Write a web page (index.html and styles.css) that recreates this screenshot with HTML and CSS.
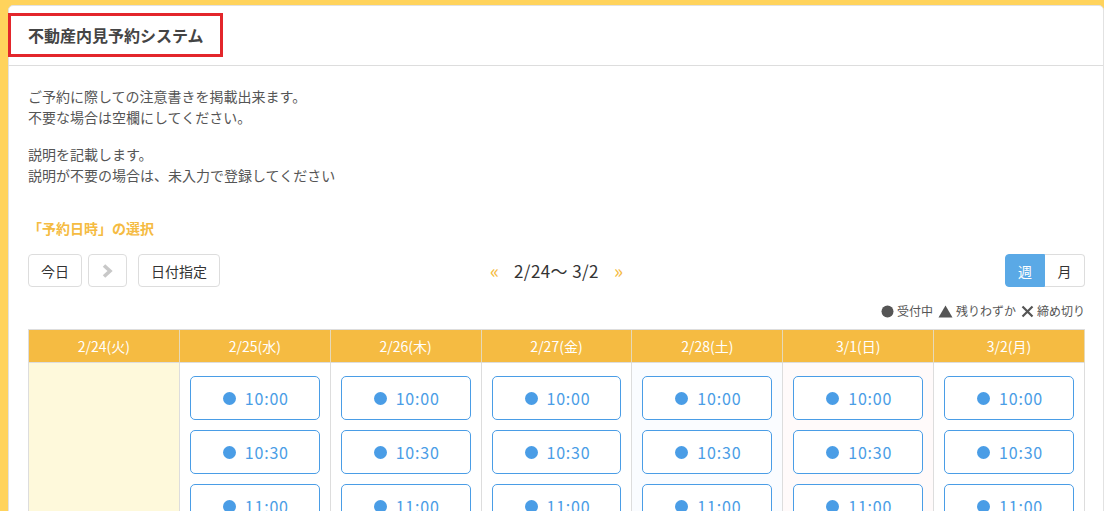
FILE: index.html
```html
<!DOCTYPE html>
<html lang="ja">
<head>
  <meta charset="UTF-8" />
  <meta name="viewport" content="width=device-width, initial-scale=1.0"/>
  <title>不動産内見予約システム</title>
  <link rel="stylesheet" href="styles.css">
</head>
<body>
  <div class="card">
    <!-- HEADER -->
    <header class="page-header">
      <h1 class="site-title">不動産内見予約システム</h1>
    </header>

    <main class="content">
      <p class="note">ご予約に際しての注意書きを掲載出来ます。<br>不要な場合は空欄にしてください。</p>
      <p class="note">説明を記載します。<br>説明が不要の場合は、未入力で登録してください</p>

      <h2 class="section-title">「予約日時」の選択</h2>

      <!-- TOOLBAR -->
      <div class="toolbar">
        <div class="tool-left">
          <button class="btn">今日</button>
          <button class="btn btn-icon" disabled>
            <svg width="11" height="14" viewBox="0 0 11 14"><path d="M2 1.5 L8 7 L2 12.5" fill="none" stroke="#c8c8c8" stroke-width="3.6"/></svg>
          </button>
          <button class="btn btn-gap">日付指定</button>
        </div>
        <div class="range">
          <span class="arrow">«</span>
          <span class="range-text">2/24～ 3/2</span>
          <span class="arrow">»</span>
        </div>
        <div class="tool-right">
          <div class="toggle">
            <button class="toggle-btn active">週</button>
            <button class="toggle-btn">月</button>
          </div>
        </div>
      </div>

      <div class="legend">
        <span class="legend-item"><svg width="13" height="13" viewBox="0 0 13 13"><circle cx="6.5" cy="6.5" r="6" fill="#555"/></svg>受付中</span>
        <span class="legend-item"><svg width="15" height="13" viewBox="0 0 15 13"><path d="M7.5 0.5 L14.5 12.5 L0.5 12.5 Z" fill="#555"/></svg>残りわずか</span>
        <span class="legend-item"><svg width="13" height="13" viewBox="0 0 13 13"><path d="M1.5 1.5 L11.5 11.5 M11.5 1.5 L1.5 11.5" stroke="#555" stroke-width="2.2"/></svg>締め切り</span>
      </div>

      <!-- CALENDAR -->
      <div class="calendar">
        <div class="cal-head">2/24(火)</div>
        <div class="cal-head">2/25(水)</div>
        <div class="cal-head">2/26(木)</div>
        <div class="cal-head">2/27(金)</div>
        <div class="cal-head">2/28(土)</div>
        <div class="cal-head">3/1(日)</div>
        <div class="cal-head">3/2(月)</div>

        <div class="cal-day past"></div>
        <div class="cal-day" data-slots></div>
        <div class="cal-day" data-slots></div>
        <div class="cal-day" data-slots></div>
        <div class="cal-day sat" data-slots></div>
        <div class="cal-day sun" data-slots></div>
        <div class="cal-day" data-slots></div>
      </div>
    </main>
  </div>

  <script>
    const times = ['10:00', '10:30', '11:00', '11:30', '12:00'];
    document.querySelectorAll('[data-slots]').forEach(day => {
      times.forEach(t => {
        const b = document.createElement('button');
        b.className = 'slot';
        b.innerHTML = '<span class="dot"></span>' + t;
        day.appendChild(b);
      });
    });
  </script>
</body>
</html>
```

FILE: styles.css
```css
:root {
  --yellow: #ffd35c;
  --orange: #f5bb42;
  --blue: #4a9de6;
  --blue-btn: #5aa9e6;
  --border: #dddddd;
  --text: #555555;
  --title: #444444;
}

* {
  box-sizing: border-box;
}

body {
  margin: 0;
  padding: 5px 0 0 8px;
  background: var(--yellow);
  font-family: "Noto Sans CJK JP", "Noto Sans", sans-serif;
  color: var(--text);
  height: 511px;
  overflow: hidden;
}

.card {
  background: #fff;
  border: 1px solid #e2e2e2;
  border-radius: 5px 5px 0 0;
  min-height: 600px;
}

.page-header {
  padding-top: 7px;
  padding-bottom: 8px;
  border-bottom: 1px solid var(--border);
  margin-left: -1px;
}

.site-title {
  display: inline-block;
  margin: 0;
  padding: 0 16px 0 17px;
  height: 44px;
  line-height: 38px;
  border: 3px solid #e3262b;
  font-size: 16px;
  font-weight: bold;
  color: var(--title);
}

.content {
  padding: 20px 18px 0 19px;
}

.note {
  margin: 0 0 16px;
  font-size: 14px;
  line-height: 21px;
}

.section-title {
  margin: 32px 0 15px;
  font-size: 14px;
  line-height: 21px;
  font-weight: bold;
  color: var(--orange);
}

.toolbar {
  display: grid;
  grid-template-columns: 1fr auto 1fr;
  align-items: center;
}

.tool-left {
  display: flex;
  gap: 6px;
}

.btn {
  height: 33px;
  padding: 0 12px;
  background: #fff;
  border: 1px solid var(--border);
  border-radius: 4px;
  font-family: inherit;
  font-size: 14px;
  color: #333;
}

.btn-icon {
  width: 39px;
  padding: 0;
  display: flex;
  align-items: center;
  justify-content: center;
}

.btn-gap {
  margin-left: 5px;
}

.range {
  display: flex;
  align-items: center;
  gap: 15px;
  font-size: 17px;
  color: #333;
}

.range-text {
  letter-spacing: 0.4px;
}

.arrow {
  color: var(--orange);
  font-size: 19px;
  line-height: 1;
  padding-bottom: 2px;
}

.tool-right {
  display: flex;
  justify-content: flex-end;
}

.toggle {
  display: flex;
}

.toggle-btn {
  width: 40px;
  height: 33px;
  border: 1px solid var(--border);
  background: #fff;
  font-family: inherit;
  font-size: 14px;
  color: #333;
}

.toggle-btn:first-child {
  border-radius: 4px 0 0 4px;
}

.toggle-btn:last-child {
  border-radius: 0 4px 4px 0;
  border-left: none;
}

.toggle-btn.active {
  background: var(--blue-btn);
  border-color: var(--blue-btn);
  color: #fff;
}

.legend {
  display: flex;
  justify-content: flex-end;
  gap: 5px;
  margin: 15px 0 9px;
  font-size: 12px;
  line-height: 18px;
}

.legend-item {
  display: flex;
  align-items: center;
  gap: 3px;
}

.calendar {
  display: grid;
  grid-template-columns: repeat(7, 1fr);
  border-left: 1px solid var(--border);
  border-top: 1px solid var(--border);
}

.cal-head {
  height: 33px;
  line-height: 32px;
  text-align: center;
  background: var(--orange);
  color: #fff;
  font-size: 14px;
  border-right: 1px solid #e6d9b8;
  border-bottom: 1px solid var(--border);
}

.cal-head:last-of-type {
  border-right-color: var(--border);
}

.cal-day {
  display: flex;
  flex-direction: column;
  gap: 10px;
  padding: 13px 10px 0;
  border-right: 1px solid var(--border);
  min-height: 200px;
}

.cal-day.past {
  background: #fef9db;
}

.cal-day.sat {
  background: #fafcff;
}

.cal-day.sun {
  background: #fffafa;
}

.slot {
  height: 44px;
  display: flex;
  align-items: center;
  justify-content: center;
  gap: 9px;
  background: #fff;
  border: 1px solid var(--blue);
  border-radius: 5px;
  font-family: inherit;
  font-size: 16px;
  letter-spacing: 0.8px;
  color: var(--blue);
  padding: 0 0 0 2px;
}

.dot {
  width: 13px;
  height: 13px;
  border-radius: 50%;
  background: var(--blue);
}
```
